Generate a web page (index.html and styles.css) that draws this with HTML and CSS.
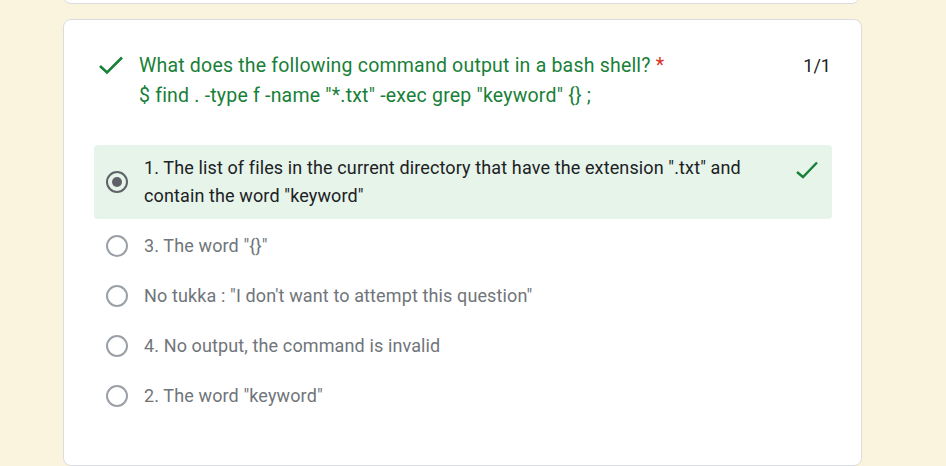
FILE: index.html
```html
<!DOCTYPE html>
<html>
<head>
<meta charset="utf-8">
<link rel="stylesheet" href="styles.css">
</head>
<body>
<div class="page">
  <div class="card card-prev"></div>
  <div class="card card-q">
    <div class="q-head">
      <svg class="q-check" width="26" height="20" viewBox="0 0 26 20"><polyline points="2,11 9,17.5 24,2.5" fill="none" stroke="#188038" stroke-width="2.6"/></svg>
      <div class="q-title">What does the following command output in a bash shell? <span class="req">*</span><br>$ find . -type f -name "*.txt" -exec grep "keyword" {} ;</div>
      <div class="q-score">1/1</div>
    </div>
    <div class="options">
      <div class="opt opt-correct">
        <span class="radio radio-on"><span class="dot"></span></span>
        <span class="opt-text">1. The list of files in the current directory that have the extension ".txt" and contain the word "keyword"</span>
        <svg class="opt-check" width="24" height="20" viewBox="0 0 24 20"><polyline points="2,12 8,17 22,2.5" fill="none" stroke="#188038" stroke-width="2.4"/></svg>
      </div>
      <div class="opt">
        <span class="radio"></span>
        <span class="opt-text muted">3. The word "{}"</span>
      </div>
      <div class="opt">
        <span class="radio"></span>
        <span class="opt-text muted">No tukka : "I don't want to attempt this question"</span>
      </div>
      <div class="opt">
        <span class="radio"></span>
        <span class="opt-text muted">4. No output, the command is invalid</span>
      </div>
      <div class="opt">
        <span class="radio"></span>
        <span class="opt-text muted">2. The word "keyword"</span>
      </div>
    </div>
  </div>
</div>
</body>
</html>
```
FILE: styles.css
```css
html, body {
  margin: 0;
  padding: 0;
  background: #faf3dd;
  font-family: Roboto, "Liberation Sans", Arial, sans-serif;
  overflow: hidden;
}
.page {
  width: 799px;
  margin-left: 63px;
  display: flex;
  flex-direction: column;
  gap: 15px;
}
.card {
  background: #fff;
  border: 1px solid #dadce0;
  border-radius: 8px;
  box-sizing: border-box;
}
.card-prev {
  height: 40px;
  margin-top: -36px;
  width: 797px;
}
.card-q {
  padding: 31px 29px 46px 30px;
}
.q-head {
  display: flex;
  align-items: flex-start;
  padding-left: 4px;
}
.q-check {
  margin-top: 4px;
  margin-right: 15px;
  flex: none;
}
.q-title {
  flex: 1;
  font-size: 19.5px;
  letter-spacing: 0.2px;
  line-height: 30px;
  color: #188038;
}
.req {
  color: #d93025;
}
.q-score {
  font-size: 18px;
  line-height: 30px;
  color: #202124;
  margin-right: 1px;
}
.options {
  margin-top: 34px;
  display: flex;
  flex-direction: column;
  gap: 4px;
}
.opt {
  display: flex;
  align-items: center;
  padding: 9px 12px;
  border-radius: 4px;
}
.opt-correct {
  background: #e6f4ea;
}
.radio {
  width: 22px;
  height: 22px;
  box-sizing: border-box;
  border: 2px solid #9aa0a6;
  border-radius: 50%;
  flex: none;
  display: flex;
  align-items: center;
  justify-content: center;
  margin-right: 16px;
}
.radio-on {
  border-color: #5f6368;
}
.dot {
  width: 10px;
  height: 10px;
  border-radius: 50%;
  background: #5f6368;
}
.opt-text {
  flex: 1;
  font-size: 18px;
  letter-spacing: 0.12px;
  line-height: 28px;
  color: #202124;
  padding-right: 40px;
}
.muted {
  color: #70757a;
}
.opt-check {
  flex: none;
  align-self: flex-start;
  margin-top: 6px;
  margin-right: 1px;
}
```
